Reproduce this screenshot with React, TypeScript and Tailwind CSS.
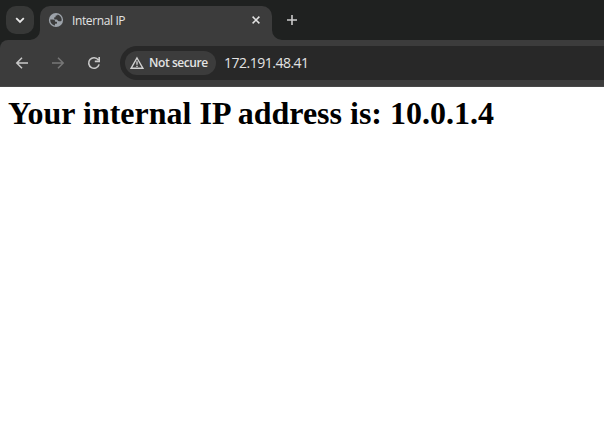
import React from "react";

const line = { fill: "none", stroke: "currentColor" } as const;

function TabFoot({ flip = false }: { flip?: boolean }) {
  return (
    <svg width="10" height="10" viewBox="0 0 10 10" className={flip ? "-scale-x-100" : ""}>
      <path d="M0 0 A10 10 0 0 0 10 10 H0Z" fill="#3c3c3c" />
    </svg>
  );
}

function TabStrip() {
  return (
    <div className="flex h-10 bg-[#1f2120] pl-1.5">
      <button aria-label="Search tabs" className="mt-1.5 flex size-7 items-center justify-center rounded-[10px] bg-[#373837] text-[#e8e8e8]">
        <svg width="28" height="28" viewBox="0 0 28 28" {...line} strokeWidth="1.8">
          <path d="M10.2 12.2 L14 16 L17.8 12.2" />
        </svg>
      </button>
      <div className="-ml-1 flex items-end">
        <TabFoot flip />
      </div>
      <div className="mt-1.5 flex h-[34px] w-[232px] items-start rounded-t-[10px] bg-[#3c3c3c] pl-2 pr-2 text-[#e3e3e3]">
        <svg className="mt-1.5 shrink-0" width="16" height="16" viewBox="0 0 16 16">
          <circle cx="8" cy="8" r="7.1" fill="#9da3aa" />
          <path d="M9.6 2.5 C12 3 13.7 5.2 13.7 8 L13.3 9 C12.7 9.3 11.3 9.5 10.2 9 C9.2 8.6 9.7 7.6 8.6 7.6 H6.2 V6 C6.2 5.4 6.8 5.3 7.6 5.3 V4.3 C7.6 3.5 8.3 3.6 9.2 3.6Z" fill="#3c3c3c" />
          <path d="M2.3 7.6 H4.8 C6.4 7.6 7.2 8.5 7.2 9.7 H8.4 C9.3 9.7 9.3 11.8 8.4 11.8 H7 V13.6 C4.2 13.2 2 10.8 2.3 7.6Z" fill="#3c3c3c" />
        </svg>
        <span className="ml-2 mt-[7px] flex-1 whitespace-nowrap font-['Open_Sans','Noto_Sans',sans-serif] text-[12px] leading-4 tracking-[-0.38px]">Internal IP</span>
        <svg className="mt-1.5" width="16" height="16" viewBox="0 0 16 16" {...line} strokeWidth="1.5">
          <path d="M4.6 4.6 L11.4 11.4 M11.4 4.6 L4.6 11.4" />
        </svg>
      </div>
      <div className="flex items-end">
        <TabFoot flip={false} />
      </div>
      <button aria-label="New tab" className="mt-3 ml-0.5 size-4 text-[#cbcbcb]">
        <svg width="16" height="16" viewBox="0 0 16 16" {...line} strokeWidth="1.6">
          <path d="M8 3 V13 M3 8 H13" />
        </svg>
      </button>
    </div>
  );
}

function Toolbar() {
  return (
    <div className="bg-[#1f2120]">
      <div className="flex h-[47px] items-start rounded-tl-[8px] border-b border-[#484848] bg-[#3c3c3c] pl-3.5 pt-1.5 text-[#c9c9c9]">
        <div className="mt-[9px] flex gap-5">
          <svg width="16" height="16" viewBox="0 0 16 16" {...line} strokeWidth="1.5">
            <path d="M14 8 H3 M8 2.8 L2.8 8 L8 13.2" />
          </svg>
          <svg className="text-[#777777]" width="16" height="16" viewBox="0 0 16 16" {...line} strokeWidth="1.5">
            <path d="M2 8 H13 M8 2.8 L13.2 8 L8 13.2" />
          </svg>
          <svg width="16" height="16" viewBox="0 0 16 16" {...line} strokeWidth="1.6">
            <path d="M13.1 9.4 A5.3 5.3 0 1 1 12.3 4.9 M13.2 2 V6.4 H8.8" />
          </svg>
        </div>
        <div className="ml-[18px] flex h-[34px] flex-1 items-center rounded-l-full bg-[#282828] pl-[5px] font-['Open_Sans','Noto_Sans',sans-serif]">
          <div className="flex h-6 w-[91px] items-center rounded-full bg-[#3c3c3c] pl-[5px] text-[#e3e3e3]">
            <svg className="shrink-0 text-[#d0d0d0]" width="14" height="14" viewBox="0 0 14 14" {...line} strokeWidth="1.4">
              <path d="M7 2 L13 12.3 H1Z M7 5.3 V8.8 M7 9.7 V11" />
            </svg>
            <span className="ml-[5px] whitespace-nowrap text-[12px] font-semibold leading-4 tracking-[-0.42px]">Not secure</span>
          </div>
          <span className="ml-2 whitespace-nowrap text-[14px] leading-5 tracking-[-0.5px] text-[#e3e3e3]">172.191.48.41</span>
        </div>
      </div>
    </div>
  );
}

export default function App() {
  return (
    <div className="flex h-screen flex-col overflow-hidden bg-white">
      <TabStrip />
      <Toolbar />
      <main className="px-2 pt-2">
        <h1 className="whitespace-nowrap font-['Liberation_Serif',serif] text-[32px] font-bold leading-[37px] text-black">
          Your internal IP address is: 10.0.1.4
        </h1>
      </main>
    </div>
  );
}
